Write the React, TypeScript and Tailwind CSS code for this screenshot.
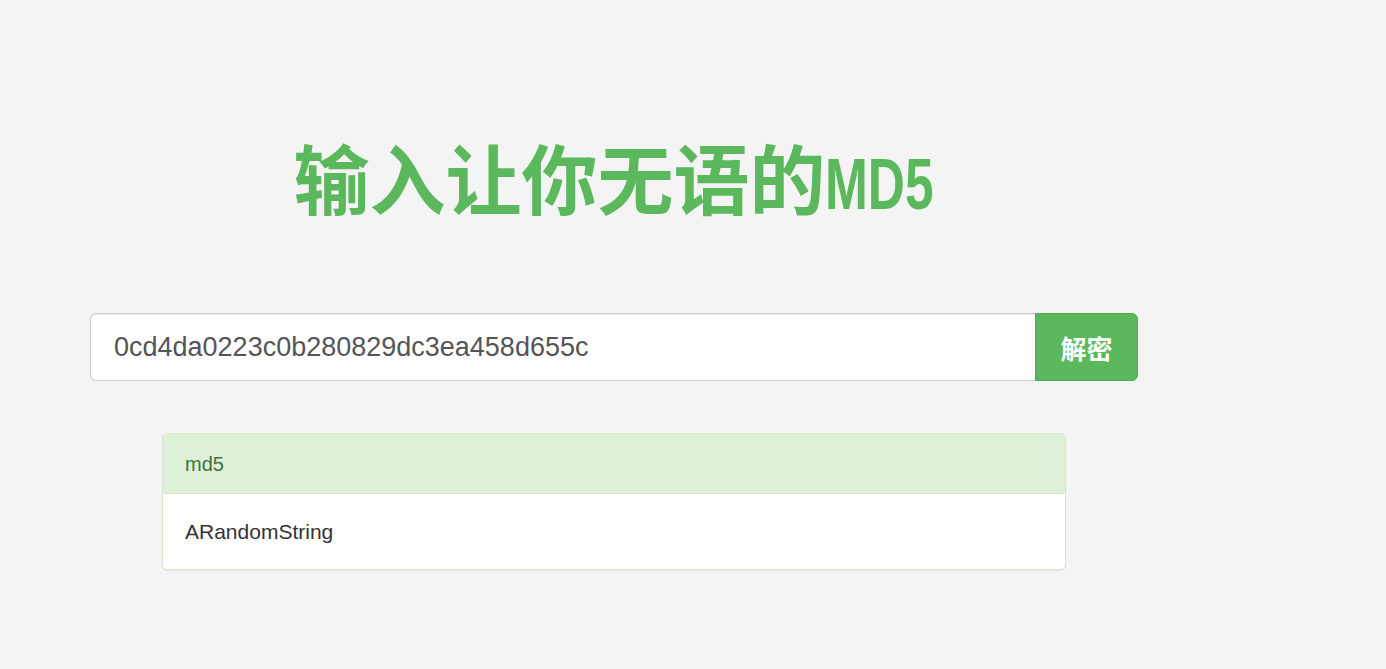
export default function App() {
  return (
    <div className="min-h-screen w-full bg-[#f4f4f4] font-['Liberation_Sans',Arial,sans-serif]">
      <div className="ml-[90px] w-[1048px] pt-[138px]">
        <h1 className="text-center text-[76px] leading-none font-bold text-[#5cb85c] font-['Noto_Sans_CJK_SC',sans-serif]">
          输入让你无语的
          <span className="mr-[-45px] inline-block origin-left scale-x-[0.705] font-['Liberation_Sans',Arial,sans-serif] text-[73px]">
            MD5
          </span>
        </h1>

        <div className="mt-[93px] flex h-[68px]">
          <input
            className="h-full flex-1 rounded-l-[6px] border border-r-0 border-[#cccccc] bg-white pl-[23px] text-[27px] text-[#555555] shadow-[inset_0_1px_1px_rgba(0,0,0,0.075)] focus:outline-none"
            type="text"
            defaultValue="0cd4da0223c0b280829dc3ea458d655c"
          />
          <button
            type="submit"
            className="h-full w-[103px] rounded-r-[6px] border border-[#4cae4c] bg-[#5cb85c] text-[26px] font-bold text-white font-['Noto_Sans_CJK_SC',sans-serif]"
          >
            解密
          </button>
        </div>

        <div className="mx-auto mt-[52px] w-[904px] overflow-hidden rounded-[5px] border border-[#d6e9c6] bg-white shadow-[0_1px_1px_rgba(0,0,0,0.05)]">
          <div className="flex h-[60px] items-center border-b border-[#d6e9c6] bg-[#dff0d8] px-[22px] text-[20px] text-[#3c763d]">
            md5
          </div>
          <div className="flex h-[75px] items-center px-[22px] text-[21px] text-[#333333]">
            ARandomString
          </div>
        </div>
      </div>
    </div>
  );
}
